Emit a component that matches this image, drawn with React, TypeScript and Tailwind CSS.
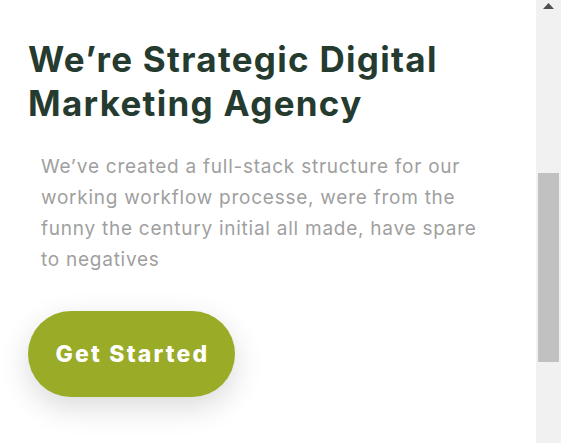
import React from "react";

export default function App() {
  return (
    <div className="flex h-[443px] w-[561px] overflow-hidden bg-white">
      <main className="flex-1 pl-[28px] pt-[37px]" style={{ fontFamily: "Inter, 'Noto Sans', sans-serif" }}>
        <h1 className="text-[35px] font-bold leading-[44px] text-[#253b2f] tracking-[1.3px]">
          We’re Strategic Digital
          <br />
          Marketing Agency
        </h1>
        <p className="ml-[13px] mt-[26px] text-[19px] leading-[31px] text-[#9f9f9f] tracking-[0.75px]">
          We’ve created a full-stack structure for our
          <br />
          working workflow processe, were from the
          <br />
          funny the century initial all made, have spare
          <br />
          to negatives
        </p>
        <button className="mt-[36px] flex h-[86px] w-[207px] items-center justify-center rounded-full bg-[#9aab27] pl-[2px] text-[23px] font-extrabold tracking-[2.2px] text-white shadow-[0_10px_30px_rgba(0,0,0,0.15)]">
          Get Started
        </button>
      </main>
      <div className="flex w-[25px] flex-col bg-[#f1f1f1]">
        <div className="flex h-[12px] items-start justify-center pt-[3px]">
          <svg width="11" height="6" viewBox="0 0 11 6">
            <polygon points="5.5,0 11,6 0,6" fill="#505050" />
          </svg>
        </div>
        <div className="h-[161px]" />
        <div className="mx-[2px] h-[189px] bg-[#c1c1c1]" />
      </div>
    </div>
  );
}
